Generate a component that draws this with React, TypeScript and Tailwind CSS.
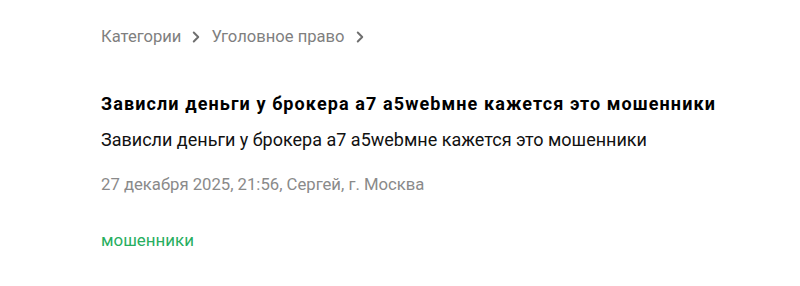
import { ChevronRight } from 'lucide-react';

export default function App() {
  return (
    <div className="w-[800px] h-[286px] bg-white font-['Roboto',sans-serif] pl-[101px] pr-[40px] pt-[27px]">
      <nav className="flex items-center text-[16.6px] leading-[20px] text-[#7f7f7f]">
        <span>Категории</span>
        <ChevronRight className="w-[18px] h-[18px] mx-[6px] text-[#6f6f6f]" strokeWidth={2.6} />
        <span>Уголовное право</span>
        <ChevronRight className="w-[18px] h-[18px] mx-[6px] text-[#6f6f6f]" strokeWidth={2.6} />
      </nav>
      <h1 className="mt-[45px] whitespace-nowrap text-[18px] leading-[24px] font-bold tracking-[1.1px] text-black">
        Зависли деньги у брокера a7 a5webмне кажется это мошенники
      </h1>
      <p className="mt-[12px] text-[18px] leading-[24px] text-[#111]">
        Зависли деньги у брокера a7 a5webмне кажется это мошенники
      </p>
      <div className="mt-[23px] text-[16.7px] leading-[20px] text-[#8a8a8a]">
        27 декабря 2025, 21:56, Сергей, г. Москва
      </div>
      <div className="mt-[35px] text-[16.9px] leading-[20px] text-[#27ae60]">мошенники</div>
    </div>
  );
}
